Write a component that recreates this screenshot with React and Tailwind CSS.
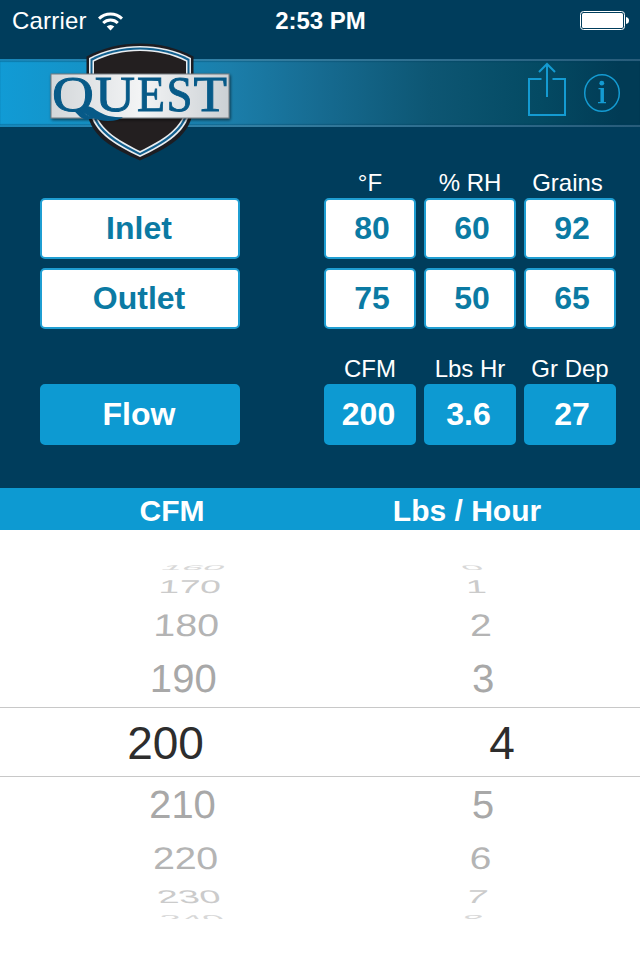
import React from "react";
import clsx from "clsx";

const readings = [
  { label: "Inlet", values: ["80", "60", "92"] },
  { label: "Outlet", values: ["75", "50", "65"] },
];

// height of each wheel row, then x offset / scale / skew for both columns
const wheelRows = [
  { h: 13, cfm: "160", lbs: "0", x: [33, -8], y: 1, sx: 0.94, sy: 0.17, skew: 12, color: "#d8d8d8" },
  { h: 26, cfm: "170", lbs: "1", x: [29.5, -4], y: 1, sx: 0.93, sy: 0.46, skew: 3, color: "#cbcbcb" },
  { h: 51, cfm: "180", lbs: "2", x: [26, 0.5], sx: 0.98, sy: 0.78, skew: 2, color: "#b4b4b4" },
  { h: 57, cfm: "190", lbs: "3", x: [23, 3], y: -0.5, sx: 1, sy: 0.98, skew: 1, color: "#a8a8a8" },
  { h: 70, cfm: "200", lbs: "4", selected: true, x: [5.5, 22], y: 0.5, sx: 1, sy: 1.02, skew: 0, color: "#2d2d2d" },
  { h: 55, cfm: "210", lbs: "5", x: [22, 3], y: -1, sx: 1, sy: 0.98, skew: -1, color: "#a8a8a8" },
  { h: 51, cfm: "220", lbs: "6", x: [25, 0.5], sx: 0.98, sy: 0.78, skew: -2, color: "#b4b4b4" },
  { h: 27, cfm: "230", lbs: "7", x: [28.5, -3], sx: 0.94, sy: 0.46, skew: -7, color: "#cbcbcb" },
  { h: 9, cfm: "240", lbs: "8", x: [32, -8], y: 3, sx: 0.94, sy: 0.25, skew: -12, color: "#d8d8d8" },
];

const StatusBar = () => (
  <div className="flex h-[59px] items-start justify-between pl-3 pr-[11px] pt-[9px] text-2xl leading-6 text-white">
    <div className="flex w-[262px] items-center gap-[11px]">
      <span className="tracking-[0.2px]">Carrier</span>
      <svg width="25" height="19" viewBox="0 0 25 19" fill="none" stroke="#fff" strokeWidth="3">
        <path d="M1 6.6 A16.5 16.5 0 0 1 24 6.6" />
        <path d="M5.2 11 A10.5 10.5 0 0 1 19.8 11" />
        <path d="M8.7 14.5 A5.4 5.4 0 0 1 16.3 14.5 L12.5 18.5 Z" fill="#fff" stroke="none" />
      </svg>
    </div>
    <span className="font-bold">2:53 PM</span>
    <div className="flex w-[262px] justify-end pt-[2px]">
      <svg width="49" height="19" viewBox="0 0 49 19">
        <rect x="0.5" y="0.5" width="44" height="18" rx="3" fill="none" stroke="#fff" />
        <rect x="2" y="2" width="41" height="15" rx="1.5" fill="#fff" />
        <path d="M46 6 Q49 6.5 49 9.5 Q49 12.5 46 13 Z" fill="#fff" />
      </svg>
    </div>
  </div>
);

const Logo = () => (
  <svg className="absolute left-0 top-[-59px]" width="250" height="170" viewBox="0 0 250 170">
    <defs>
      <linearGradient id="plate">
        <stop offset="0" stopColor="#d3d7da" />
        <stop offset="0.5" stopColor="#f3f4f5" />
        <stop offset="1" stopColor="#cbd0d4" />
      </linearGradient>
      <filter id="shade" x="-10%" y="-20%" width="120%" height="150%">
        <feDropShadow dx="1" dy="1.5" stdDeviation="1.5" floodOpacity="0.6" />
      </filter>
    </defs>
    <path d="M140 43.5 C159 43.5 178 48 193.5 56.5 V105 C193 137 165 149 140 160.5 C115 149 87 137 86.5 105 V56.5 C102 48 121 43.5 140 43.5 Z" fill="#1d1d22" />
    <path d="M140 46 C158 46 176 50 191 58 V104 C190 132 165 145 140 157 C115 145 90 132 89 104 V58 C104 50 122 46 140 46 Z" fill="#e9eef2" />
    <path d="M140 47.5 C158 47.5 175 51.5 189.5 59 V104 C188 131 164 143.5 140 155.3 C116 143.5 92 131 90.5 104 V59 C105 51.5 122 47.5 140 47.5 Z" fill="#12608f" />
    <path d="M140 49.5 C157 49.5 173 53 187.5 60.5 V104 C186 129 163 141.5 140 153 C117 141.5 94 129 92.5 104 V60.5 C107 53 123 49.5 140 49.5 Z" fill="#e9eef2" />
    <path d="M140 51 C157 51 172 54.5 186 61.5 V104 C185 127.5 162 140 140 151 C118 140 95 127.5 94 104 V61.5 C108 54.5 123 51 140 51 Z" fill="#231f20" />
    <rect x="51" y="74" width="178" height="44" fill="url(#plate)" stroke="#747a80" filter="url(#shade)" />
    <g fill="#075a88" stroke="#075a88" strokeWidth="0.9" fontFamily="Liberation Serif, serif" fontSize="51">
      <text x="52" y="110.5" textLength="42" lengthAdjust="spacingAndGlyphs">Q</text>
      <text x="95" y="111" textLength="40" lengthAdjust="spacingAndGlyphs">U</text>
      <text x="137" y="111" textLength="28" lengthAdjust="spacingAndGlyphs">E</text>
      <text x="166.5" y="111" textLength="26" lengthAdjust="spacingAndGlyphs">S</text>
      <text x="193.5" y="111" textLength="33.5" lengthAdjust="spacingAndGlyphs">T</text>
    </g>
    <path d="M78 108.5 C87 116 96 121 108 121 C115 121 120 119.5 123 117 C112 118 102 115 93 108 L88 106 Z" fill="#075a88" />
  </svg>
);

const Header = () => (
  <div className="relative h-[68px] bg-linear-to-r from-[#1686b9] via-[#347ea1] via-40% to-[#285c7a] py-[2px]">
    <div className="flex h-[64px] items-start justify-end bg-[linear-gradient(90deg,#119bd5_0,#1592c6_90px,#1b7eaa_230px,#166b91_320px,#0d5673_430px,#044a63_540px,#013b55_620px)] pr-[19px] shadow-[inset_0_-1px_1px_#003c5c50,inset_0_1px_1px_#003c5c50]">
      <svg width="94" height="58" viewBox="527 62 94 58" fill="none" stroke="#149bd2" strokeWidth="2" className="mt-[1px]">
        <path d="M541.5 79 H529 V115 H565 V79 H552.5" />
        <path d="M547 97 V65 M539 72 L547 64 L555 72" />
        <ellipse cx="602" cy="93" rx="17.3" ry="18.3" strokeWidth="1.5" />
        <circle cx="601.8" cy="83.2" r="2.4" fill="#149bd2" stroke="none" />
        <path d="M598.5 88.7 H602.5 M598 102.6 H606" strokeWidth="1.3" />
        <path d="M602.2 88 V103" strokeWidth="3.5" />
      </svg>
    </div>
    <Logo />
  </div>
);

const Box = ({ filled, wide, shift, children }) => (
  <div
    className={clsx(
      "flex h-[61px] items-center justify-center rounded-[5px] border-2 pb-[2px] text-[32px] font-bold leading-none",
      wide ? "w-[200px] pr-[2px]" : "w-[92px]",
      shift === "right" && "pl-1",
      shift === "left" && "pr-[3px]",
      filled ? "border-[#0d9ad2] bg-[#0d9ad2] text-white" : "border-[#1f9ed2] bg-white text-[#0b7aa3]"
    )}
  >
    {children}
  </div>
);

const Labels = ({ items }) => (
  <div className="flex justify-end gap-2 text-2xl leading-7 text-white">
    {items.map((item) => (
      <div
        key={item}
        className={clsx("w-[92px] whitespace-nowrap text-center", item === "Grains" && "pr-[5px]")}
      >
        {item}
      </div>
    ))}
  </div>
);

const Wheel = () => (
  <div className="flex h-[430px] flex-col bg-white pt-[30px]">
    {wheelRows.map((row) => (
      <div
        key={row.cfm}
        className={clsx(
          "flex shrink-0 items-center leading-none",
          row.selected ? "border-y border-[#c8c8c8] text-[46px]" : "text-[40px]",
          row.cfm === "240" && "overflow-hidden"
        )}
        style={{ height: row.h, color: row.color }}
      >
        {[row.cfm, row.lbs].map((value, i) => (
          <div key={i} className="flex w-1/2 justify-center">
            <span
              style={{
                transform: `translate(${row.x[i]}px, ${row.y || 0}px) scale(${row.sx}, ${row.sy}) skewX(${i ? row.skew : -row.skew}deg)`,
              }}
            >
              {value}
            </span>
          </div>
        ))}
      </div>
    ))}
  </div>
);

const App = () => {
  return (
    <div className="h-[960px] w-[640px] overflow-hidden bg-[#003d5c] font-['Liberation_Sans',Arial,sans-serif]">
      <StatusBar />
      <Header />
      <div className="flex h-[361px] flex-col pl-10 pr-6 pt-[42px]">
        <Labels items={["°F", "% RH", "Grains"]} />
        <div className="mt-[1px] flex flex-col gap-[9px]">
          {readings.map((row) => (
            <div key={row.label} className="flex justify-between">
              <Box wide>{row.label}</Box>
              <div className="flex gap-2">
                {row.values.map((value) => (
                  <Box key={value} shift="right">
                    {value}
                  </Box>
                ))}
              </div>
            </div>
          ))}
        </div>
        <div className="mt-[26px]">
          <Labels items={["CFM", "Lbs Hr", "Gr Dep"]} />
        </div>
        <div className="mt-[1px] flex justify-between">
          <Box wide filled>
            Flow
          </Box>
          <div className="flex gap-2">
            <Box filled shift="left">200</Box>
            <Box filled shift="left">3.6</Box>
            <Box filled shift="right">27</Box>
          </div>
        </div>
      </div>
      <div className="flex h-[42px] items-center bg-[#0d9ad2] pl-3 pt-[3px] text-[30px] font-bold leading-none text-white">
        <div className="w-[320px] text-center">CFM</div>
        <div className="w-[270px] text-center">Lbs / Hour</div>
      </div>
      <Wheel />
    </div>
  );
};

export default App;
